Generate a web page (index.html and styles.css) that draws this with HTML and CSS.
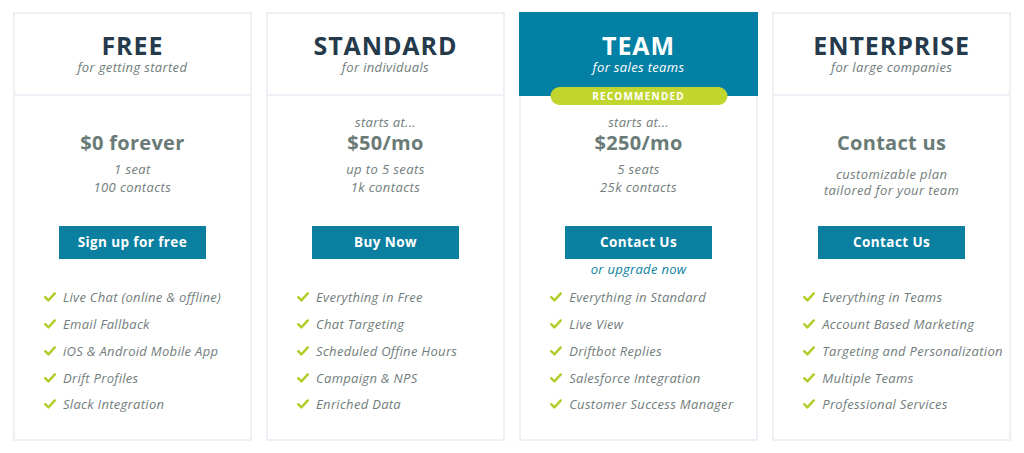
FILE: index.html
```html
<!DOCTYPE html>
<html lang="en">
<head>
<meta charset="utf-8">
<title>Pricing</title>
<link rel="stylesheet" href="styles.css">
</head>
<body>
<div class="plans">
  <div class="card">
    <div class="head">
      <h2 class="name">FREE</h2>
      <p class="tag">for getting started</p>
    </div>
    <div class="body">
      <div class="info">
        <div class="starts"></div>
        <div class="price">$0 forever</div>
        <div class="detail">1 seat<br>100 contacts</div>
      </div>
      <div class="action"><a class="btn">Sign up for free</a></div>
      <ul class="features">
        <li><svg class="check" viewBox="0 0 12 10"><path d="M1.2 5.2 L4.4 8.4 L10.8 1.4"/></svg>Live Chat (online &amp; offline)</li>
        <li><svg class="check" viewBox="0 0 12 10"><path d="M1.2 5.2 L4.4 8.4 L10.8 1.4"/></svg>Email Fallback</li>
        <li><svg class="check" viewBox="0 0 12 10"><path d="M1.2 5.2 L4.4 8.4 L10.8 1.4"/></svg>iOS &amp; Android Mobile App</li>
        <li><svg class="check" viewBox="0 0 12 10"><path d="M1.2 5.2 L4.4 8.4 L10.8 1.4"/></svg>Drift Profiles</li>
        <li><svg class="check" viewBox="0 0 12 10"><path d="M1.2 5.2 L4.4 8.4 L10.8 1.4"/></svg>Slack Integration</li>
      </ul>
    </div>
  </div>
  <div class="card">
    <div class="head">
      <h2 class="name">STANDARD</h2>
      <p class="tag">for individuals</p>
    </div>
    <div class="body">
      <div class="info">
        <div class="starts">starts at...</div>
        <div class="price">$50/mo</div>
        <div class="detail">up to 5 seats<br>1k contacts</div>
      </div>
      <div class="action"><a class="btn">Buy Now</a></div>
      <ul class="features">
        <li><svg class="check" viewBox="0 0 12 10"><path d="M1.2 5.2 L4.4 8.4 L10.8 1.4"/></svg>Everything in Free</li>
        <li><svg class="check" viewBox="0 0 12 10"><path d="M1.2 5.2 L4.4 8.4 L10.8 1.4"/></svg>Chat Targeting</li>
        <li><svg class="check" viewBox="0 0 12 10"><path d="M1.2 5.2 L4.4 8.4 L10.8 1.4"/></svg>Scheduled Offine Hours</li>
        <li><svg class="check" viewBox="0 0 12 10"><path d="M1.2 5.2 L4.4 8.4 L10.8 1.4"/></svg>Campaign &amp; NPS</li>
        <li><svg class="check" viewBox="0 0 12 10"><path d="M1.2 5.2 L4.4 8.4 L10.8 1.4"/></svg>Enriched Data</li>
      </ul>
    </div>
  </div>
  <div class="card featured">
    <div class="head">
      <h2 class="name">TEAM</h2>
      <p class="tag">for sales teams</p>
      <span class="badge">RECOMMENDED</span>
    </div>
    <div class="body">
      <div class="info">
        <div class="starts">starts at...</div>
        <div class="price">$250/mo</div>
        <div class="detail">5 seats<br>25k contacts</div>
      </div>
      <div class="action"><a class="btn">Contact Us</a><a class="upgrade">or upgrade now</a></div>
      <ul class="features">
        <li><svg class="check" viewBox="0 0 12 10"><path d="M1.2 5.2 L4.4 8.4 L10.8 1.4"/></svg>Everything in Standard</li>
        <li><svg class="check" viewBox="0 0 12 10"><path d="M1.2 5.2 L4.4 8.4 L10.8 1.4"/></svg>Live View</li>
        <li><svg class="check" viewBox="0 0 12 10"><path d="M1.2 5.2 L4.4 8.4 L10.8 1.4"/></svg>Driftbot Replies</li>
        <li><svg class="check" viewBox="0 0 12 10"><path d="M1.2 5.2 L4.4 8.4 L10.8 1.4"/></svg>Salesforce Integration</li>
        <li><svg class="check" viewBox="0 0 12 10"><path d="M1.2 5.2 L4.4 8.4 L10.8 1.4"/></svg>Customer Success Manager</li>
      </ul>
    </div>
  </div>
  <div class="card">
    <div class="head">
      <h2 class="name">ENTERPRISE</h2>
      <p class="tag">for large companies</p>
    </div>
    <div class="body">
      <div class="info">
        <div class="starts"></div>
        <div class="price">Contact us</div>
        <div class="detail custom">customizable plan<br>tailored for your team</div>
      </div>
      <div class="action"><a class="btn">Contact Us</a></div>
      <ul class="features">
        <li><svg class="check" viewBox="0 0 12 10"><path d="M1.2 5.2 L4.4 8.4 L10.8 1.4"/></svg>Everything in Teams</li>
        <li><svg class="check" viewBox="0 0 12 10"><path d="M1.2 5.2 L4.4 8.4 L10.8 1.4"/></svg>Account Based Marketing</li>
        <li><svg class="check" viewBox="0 0 12 10"><path d="M1.2 5.2 L4.4 8.4 L10.8 1.4"/></svg>Targeting and Personalization</li>
        <li><svg class="check" viewBox="0 0 12 10"><path d="M1.2 5.2 L4.4 8.4 L10.8 1.4"/></svg>Multiple Teams</li>
        <li><svg class="check" viewBox="0 0 12 10"><path d="M1.2 5.2 L4.4 8.4 L10.8 1.4"/></svg>Professional Services</li>
      </ul>
    </div>
  </div>
</div>
</body>
</html>
```
FILE: styles.css
```css
* { box-sizing: border-box; }
html, body { margin: 0; padding: 0; background: #ffffff; }
body {
  font-family: "Open Sans", "DejaVu Sans", sans-serif;
  color: #717d7c;
}
.plans {
  display: grid;
  grid-template-columns: repeat(4, 1fr);
  column-gap: 14.33px;
  width: 998px;
  margin: 12px 0 0 13px;
}
.card {
  border: 2px solid #edf1f5;
  height: 429px;
  display: flex;
  flex-direction: column;
}
.head {
  position: relative;
  height: 82px;
  padding-top: 16px;
  border-bottom: 2px solid #edf1f5;
  text-align: center;
}
.featured .head {
  margin: -2px -2px 0;
  height: 84px;
  padding-top: 18px;
  background: #0380a3;
  border-bottom: none;
}
.name {
  margin: 0;
  font-size: 25px;
  line-height: 30px;
  font-weight: 700;
  color: #253a4b;
  letter-spacing: 0.9px;
}
.tag {
  margin: 0;
  font-size: 13px;
  line-height: 15px;
  font-style: italic;
  color: #6f7b7b;
  letter-spacing: 0.35px;
}
.featured .name, .featured .tag { color: #ffffff; }
.badge {
  position: absolute;
  left: 50%;
  bottom: -9px;
  transform: translateX(-50%);
  width: 177px;
  height: 18px;
  border-radius: 9px;
  background: #c1d52f;
  color: #ffffff;
  font-size: 10px;
  line-height: 18px;
  font-weight: 700;
  letter-spacing: 1.2px;
}
.body {
  padding-top: 18px;
  text-align: center;
}
.info { height: 112px; }
.starts {
  height: 18px;
  font-size: 13px;
  line-height: 16px;
  font-style: italic;
  letter-spacing: 0.3px;
}
.price {
  font-size: 20px;
  line-height: 22px;
  font-weight: 700;
  color: #6a7b77;
  letter-spacing: 0.3px;
}
.detail {
  margin-top: 6px;
  font-size: 13px;
  line-height: 18px;
  font-style: italic;
  letter-spacing: 0.4px;
}
.detail.custom {
  margin-top: 12px;
  line-height: 16px;
}
.action {
  height: 58px;
  display: flex;
  flex-direction: column;
  align-items: center;
}
.btn {
  display: block;
  width: 147px;
  height: 33px;
  background: #0a7fa0;
  color: #ffffff;
  font-size: 13.5px;
  font-weight: 700;
  line-height: 33px;
  text-align: center;
  letter-spacing: 0.4px;
}
.upgrade {
  display: block;
  font-size: 13px;
  line-height: 20px;
  font-style: italic;
  color: #0a7fa0;
  letter-spacing: 0.3px;
}
.features {
  list-style: none;
  margin: 0;
  padding: 0 0 0 29px;
  text-align: left;
}
.features li {
  display: flex;
  align-items: center;
  height: 26.75px;
  font-size: 13px;
  font-style: italic;
  white-space: nowrap;
  letter-spacing: 0.3px;
}
.check {
  width: 12px;
  height: 10px;
  margin-right: 7px;
  flex: none;
  fill: none;
  stroke: #b3cc2a;
  stroke-width: 2.4;
  stroke-linecap: round;
  stroke-linejoin: round;
}
```
